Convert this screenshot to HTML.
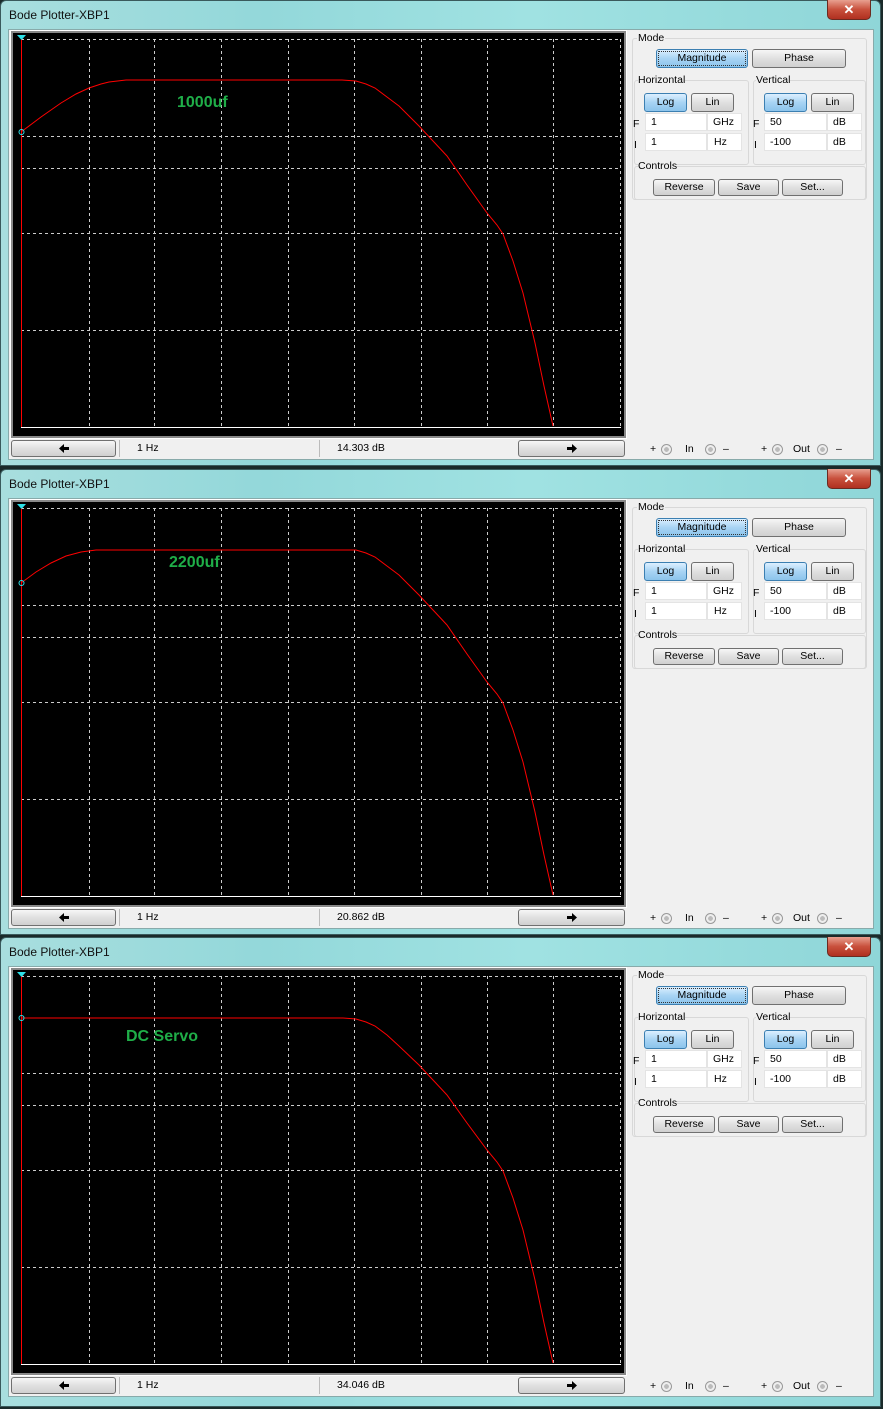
<!DOCTYPE html>
<html><head><meta charset="utf-8"><style>
*{box-sizing:border-box;margin:0;padding:0}
body{width:883px;height:1409px;background:#1a2a2a;position:relative;overflow:hidden;font-family:"Liberation Sans",sans-serif;font-size:11px;color:#000}
.win{position:absolute;left:0;width:881px;height:466px;border:1px solid #3a5a5c;border-radius:6px 6px 0 0;background:linear-gradient(90deg,#a8dede 0%,#93d8da 30%,#a0e2e2 60%,#8fd6d8 100%)}
.title{position:absolute;left:8px;top:7px;font-size:12px;color:#111}
.close{position:absolute;left:826px;top:-1px;width:44px;height:20px;border:1px solid #6a2a20;border-top:none;border-radius:0 0 5px 5px;background:linear-gradient(#e8a090,#c8503c 50%,#b03020);color:#fff;font-weight:bold;font-size:13px;text-align:center;line-height:19px}
.content{position:absolute;left:7px;top:28px;width:866px;height:431px;background:#f0f0f0;border:1px solid #8aa}
.plot{position:absolute;left:10px;top:30px;width:615px;height:407px;background:#000;border:2px solid #888;outline:1px solid #fff}
.btn{position:absolute;height:17px;border:1px solid #707070;border-radius:3px;background:linear-gradient(#f6f6f6,#e0e0e0 50%,#d0d0d0);text-align:center;line-height:15px;font-size:10.5px}
.btn.on{background:linear-gradient(#dcefff,#a8d4f4 50%,#8cc4ec);border-color:#3c7fb1}
.btn svg{margin-top:3px}
.fld{position:absolute;height:18px;background:#fff;border:1px solid #e4e4e4;padding-left:5px;line-height:17px;font-size:10.5px}
.lbl{position:absolute;font-size:10.5px}
.grp{position:absolute;border:1px solid #d8d8d8;border-radius:3px}
.st{position:absolute;top:439px;height:17px;background:#f0f0f0;border-left:1px solid #bbb;line-height:16px;padding-left:17px;font-size:10.5px}
.dot{position:absolute;width:11px;height:11px;border-radius:50%;border:1px solid #999;background:radial-gradient(#bbb 35%,#eee 40%)}
.tag{position:absolute;color:#1fae48;font-weight:bold;font-size:16px}
</style></head><body>

<!-- WINDOW 1 -->
<div class="win" style="top:0">
<div class="title">Bode Plotter-XBP1</div><div class="close">✕</div>
<div class="content"></div>
<div class="plot"></div>
<svg style="position:absolute;left:0;top:0" width="881" height="466">
<g stroke="#ccc" stroke-dasharray="3,3" stroke-width="1">
<line x1="20" y1="38.5" x2="620" y2="38.5"/><line x1="20" y1="135.5" x2="620" y2="135.5"/><line x1="20" y1="167.5" x2="620" y2="167.5"/><line x1="20" y1="232.5" x2="620" y2="232.5"/><line x1="20" y1="329.5" x2="620" y2="329.5"/>
<line x1="88.5" y1="38" x2="88.5" y2="426"/><line x1="153.5" y1="38" x2="153.5" y2="426"/><line x1="220.5" y1="38" x2="220.5" y2="426"/><line x1="287.5" y1="38" x2="287.5" y2="426"/><line x1="353.5" y1="38" x2="353.5" y2="426"/><line x1="420.5" y1="38" x2="420.5" y2="426"/><line x1="486.5" y1="38" x2="486.5" y2="426"/><line x1="552.5" y1="38" x2="552.5" y2="426"/><line x1="619.5" y1="38" x2="619.5" y2="426"/>
</g>
<line x1="20" y1="426.5" x2="620" y2="426.5" stroke="#fff"/>
<line x1="20.5" y1="36" x2="20.5" y2="426" stroke="#f00"/>
<path d="M16,34 L25,34 L20.5,39Z" fill="#2de0e8"/>
<path d="M20,131 L40,116 L60,102 L75,93 L88,87 L100,83 L108,81 L125,79 L341,79 L355,80 L365,83 L374,87 L386,96 L398,105 L418,125 L432,140 L446,155 L466,184 L486,212 L496,224 L502,233 L512,260 L522,292 L534,342 L543,385 L552,425" fill="none" stroke="#f00"/>
<circle cx="20.5" cy="131" r="2.5" fill="none" stroke="#2de0e8"/>
</svg>
<div class="tag" style="left:176px;top:93px">1000uf</div>
<div class="btn" style="left:10px;top:439px;width:105px"><svg width="10" height="9"><path d="M0,4.5 L5,0 L5,3 L10,3 L10,6 L5,6 L5,9Z"/></svg></div>
<div class="st" style="left:118px;width:200px">1 Hz</div>
<div class="st" style="left:318px;width:198px">14.303 dB</div>
<div class="btn" style="left:517px;top:439px;width:107px"><svg width="10" height="9"><path d="M10,4.5 L5,0 L5,3 L0,3 L0,6 L5,6 L5,9Z"/></svg></div>
<div class="lbl" style="left:649px;top:442px">+</div><div class="dot" style="left:660px;top:443px"></div>
<div class="lbl" style="left:684px;top:442px">In</div><div class="dot" style="left:704px;top:443px"></div><div class="lbl" style="left:722px;top:442px">–</div>
<div class="lbl" style="left:760px;top:442px">+</div><div class="dot" style="left:771px;top:443px"></div>
<div class="lbl" style="left:792px;top:442px">Out</div><div class="dot" style="left:816px;top:443px"></div><div class="lbl" style="left:835px;top:442px">–</div>
<div class="grp" style="left:631px;top:37px;width:235px;height:162px"></div>
<div class="lbl" style="left:636px;top:31px;background:#f0f0f0;padding:0 1px">Mode</div>
<div class="btn on" style="left:655px;top:48px;width:92px;height:19px;line-height:17px;outline:1px dotted #333;outline-offset:-3px">Magnitude</div>
<div class="btn" style="left:751px;top:48px;width:94px;height:19px;line-height:17px">Phase</div>
<div class="grp" style="left:633px;top:79px;width:115px;height:85px"></div>
<div class="lbl" style="left:637px;top:73px;background:#f0f0f0">Horizontal</div>
<div class="grp" style="left:752px;top:79px;width:113px;height:85px"></div>
<div class="lbl" style="left:755px;top:73px;background:#f0f0f0">Vertical</div>
<div class="btn on" style="left:643px;top:92px;width:43px;height:19px;line-height:17px">Log</div>
<div class="btn" style="left:690px;top:92px;width:43px;height:19px;line-height:17px">Lin</div>
<div class="btn on" style="left:763px;top:92px;width:43px;height:19px;line-height:17px">Log</div>
<div class="btn" style="left:810px;top:92px;width:43px;height:19px;line-height:17px">Lin</div>
<div class="lbl" style="left:632px;top:117px">F</div><div class="lbl" style="left:633px;top:138px">I</div>
<div class="fld" style="left:644px;top:112px;width:62px">1</div><div class="fld" style="left:706px;top:112px;width:35px">GHz</div>
<div class="fld" style="left:644px;top:132px;width:62px">1</div><div class="fld" style="left:706px;top:132px;width:35px;padding-left:6px">Hz</div>
<div class="lbl" style="left:752px;top:117px">F</div><div class="lbl" style="left:753px;top:138px">I</div>
<div class="fld" style="left:763px;top:112px;width:63px">50</div><div class="fld" style="left:826px;top:112px;width:35px">dB</div>
<div class="fld" style="left:763px;top:132px;width:63px">-100</div><div class="fld" style="left:826px;top:132px;width:35px">dB</div>
<div class="grp" style="left:633px;top:165px;width:232px;height:34px"></div>
<div class="lbl" style="left:637px;top:159px;background:#f0f0f0">Controls</div>
<div class="btn" style="left:652px;top:178px;width:62px">Reverse</div>
<div class="btn" style="left:717px;top:178px;width:61px">Save</div>
<div class="btn" style="left:781px;top:178px;width:61px">Set...</div>
</div>

<!-- WINDOW 2 -->
<div class="win" style="top:469px">
<div class="title">Bode Plotter-XBP1</div><div class="close">✕</div>
<div class="content"></div>
<div class="plot"></div>
<svg style="position:absolute;left:0;top:0" width="881" height="466">
<g stroke="#ccc" stroke-dasharray="3,3" stroke-width="1">
<line x1="20" y1="38.5" x2="620" y2="38.5"/><line x1="20" y1="135.5" x2="620" y2="135.5"/><line x1="20" y1="167.5" x2="620" y2="167.5"/><line x1="20" y1="232.5" x2="620" y2="232.5"/><line x1="20" y1="329.5" x2="620" y2="329.5"/>
<line x1="88.5" y1="38" x2="88.5" y2="426"/><line x1="153.5" y1="38" x2="153.5" y2="426"/><line x1="220.5" y1="38" x2="220.5" y2="426"/><line x1="287.5" y1="38" x2="287.5" y2="426"/><line x1="353.5" y1="38" x2="353.5" y2="426"/><line x1="420.5" y1="38" x2="420.5" y2="426"/><line x1="486.5" y1="38" x2="486.5" y2="426"/><line x1="552.5" y1="38" x2="552.5" y2="426"/><line x1="619.5" y1="38" x2="619.5" y2="426"/>
</g>
<line x1="20" y1="426.5" x2="620" y2="426.5" stroke="#fff"/>
<line x1="20.5" y1="36" x2="20.5" y2="426" stroke="#f00"/>
<path d="M16,34 L25,34 L20.5,39Z" fill="#2de0e8"/>
<path d="M20,113 L35,102 L50,93 L65,86 L80,82 L95,80 L355,80 L365,83 L374,87 L386,96 L398,105 L418,125 L432,140 L446,155 L466,184 L486,212 L496,224 L502,233 L512,260 L522,292 L534,342 L543,385 L552,425" fill="none" stroke="#f00"/>
<circle cx="20.5" cy="113" r="2.5" fill="none" stroke="#2de0e8"/>
</svg>
<div class="tag" style="left:168px;top:84px">2200uf</div>
<div class="btn" style="left:10px;top:439px;width:105px"><svg width="10" height="9"><path d="M0,4.5 L5,0 L5,3 L10,3 L10,6 L5,6 L5,9Z"/></svg></div>
<div class="st" style="left:118px;width:200px">1 Hz</div>
<div class="st" style="left:318px;width:198px">20.862 dB</div>
<div class="btn" style="left:517px;top:439px;width:107px"><svg width="10" height="9"><path d="M10,4.5 L5,0 L5,3 L0,3 L0,6 L5,6 L5,9Z"/></svg></div>
<div class="lbl" style="left:649px;top:442px">+</div><div class="dot" style="left:660px;top:443px"></div>
<div class="lbl" style="left:684px;top:442px">In</div><div class="dot" style="left:704px;top:443px"></div><div class="lbl" style="left:722px;top:442px">–</div>
<div class="lbl" style="left:760px;top:442px">+</div><div class="dot" style="left:771px;top:443px"></div>
<div class="lbl" style="left:792px;top:442px">Out</div><div class="dot" style="left:816px;top:443px"></div><div class="lbl" style="left:835px;top:442px">–</div>
<div class="grp" style="left:631px;top:37px;width:235px;height:162px"></div>
<div class="lbl" style="left:636px;top:31px;background:#f0f0f0;padding:0 1px">Mode</div>
<div class="btn on" style="left:655px;top:48px;width:92px;height:19px;line-height:17px;outline:1px dotted #333;outline-offset:-3px">Magnitude</div>
<div class="btn" style="left:751px;top:48px;width:94px;height:19px;line-height:17px">Phase</div>
<div class="grp" style="left:633px;top:79px;width:115px;height:85px"></div>
<div class="lbl" style="left:637px;top:73px;background:#f0f0f0">Horizontal</div>
<div class="grp" style="left:752px;top:79px;width:113px;height:85px"></div>
<div class="lbl" style="left:755px;top:73px;background:#f0f0f0">Vertical</div>
<div class="btn on" style="left:643px;top:92px;width:43px;height:19px;line-height:17px">Log</div>
<div class="btn" style="left:690px;top:92px;width:43px;height:19px;line-height:17px">Lin</div>
<div class="btn on" style="left:763px;top:92px;width:43px;height:19px;line-height:17px">Log</div>
<div class="btn" style="left:810px;top:92px;width:43px;height:19px;line-height:17px">Lin</div>
<div class="lbl" style="left:632px;top:117px">F</div><div class="lbl" style="left:633px;top:138px">I</div>
<div class="fld" style="left:644px;top:112px;width:62px">1</div><div class="fld" style="left:706px;top:112px;width:35px">GHz</div>
<div class="fld" style="left:644px;top:132px;width:62px">1</div><div class="fld" style="left:706px;top:132px;width:35px;padding-left:6px">Hz</div>
<div class="lbl" style="left:752px;top:117px">F</div><div class="lbl" style="left:753px;top:138px">I</div>
<div class="fld" style="left:763px;top:112px;width:63px">50</div><div class="fld" style="left:826px;top:112px;width:35px">dB</div>
<div class="fld" style="left:763px;top:132px;width:63px">-100</div><div class="fld" style="left:826px;top:132px;width:35px">dB</div>
<div class="grp" style="left:633px;top:165px;width:232px;height:34px"></div>
<div class="lbl" style="left:637px;top:159px;background:#f0f0f0">Controls</div>
<div class="btn" style="left:652px;top:178px;width:62px">Reverse</div>
<div class="btn" style="left:717px;top:178px;width:61px">Save</div>
<div class="btn" style="left:781px;top:178px;width:61px">Set...</div>
</div>

<!-- WINDOW 3 -->
<div class="win" style="top:937px;height:470px">
<div class="title">Bode Plotter-XBP1</div><div class="close">✕</div>
<div class="content"></div>
<div class="plot"></div>
<svg style="position:absolute;left:0;top:0" width="881" height="466">
<g stroke="#ccc" stroke-dasharray="3,3" stroke-width="1">
<line x1="20" y1="38.5" x2="620" y2="38.5"/><line x1="20" y1="135.5" x2="620" y2="135.5"/><line x1="20" y1="167.5" x2="620" y2="167.5"/><line x1="20" y1="232.5" x2="620" y2="232.5"/><line x1="20" y1="329.5" x2="620" y2="329.5"/>
<line x1="88.5" y1="38" x2="88.5" y2="426"/><line x1="153.5" y1="38" x2="153.5" y2="426"/><line x1="220.5" y1="38" x2="220.5" y2="426"/><line x1="287.5" y1="38" x2="287.5" y2="426"/><line x1="353.5" y1="38" x2="353.5" y2="426"/><line x1="420.5" y1="38" x2="420.5" y2="426"/><line x1="486.5" y1="38" x2="486.5" y2="426"/><line x1="552.5" y1="38" x2="552.5" y2="426"/><line x1="619.5" y1="38" x2="619.5" y2="426"/>
</g>
<line x1="20" y1="426.5" x2="620" y2="426.5" stroke="#fff"/>
<line x1="20.5" y1="36" x2="20.5" y2="426" stroke="#f00"/>
<path d="M16,34 L25,34 L20.5,39Z" fill="#2de0e8"/>
<path d="M20,80 L342,80 L355,81 L365,84 L374,88 L386,97 L398,108 L418,127 L432,142 L446,157 L466,185 L486,212 L496,224 L502,233 L512,260 L522,292 L534,342 L543,385 L552,425" fill="none" stroke="#f00"/>
<circle cx="20.5" cy="80" r="2.5" fill="none" stroke="#2de0e8"/>
</svg>
<div class="tag" style="left:125px;top:90px">DC Servo</div>
<div class="btn" style="left:10px;top:439px;width:105px"><svg width="10" height="9"><path d="M0,4.5 L5,0 L5,3 L10,3 L10,6 L5,6 L5,9Z"/></svg></div>
<div class="st" style="left:118px;width:200px">1 Hz</div>
<div class="st" style="left:318px;width:198px">34.046 dB</div>
<div class="btn" style="left:517px;top:439px;width:107px"><svg width="10" height="9"><path d="M10,4.5 L5,0 L5,3 L0,3 L0,6 L5,6 L5,9Z"/></svg></div>
<div class="lbl" style="left:649px;top:442px">+</div><div class="dot" style="left:660px;top:443px"></div>
<div class="lbl" style="left:684px;top:442px">In</div><div class="dot" style="left:704px;top:443px"></div><div class="lbl" style="left:722px;top:442px">–</div>
<div class="lbl" style="left:760px;top:442px">+</div><div class="dot" style="left:771px;top:443px"></div>
<div class="lbl" style="left:792px;top:442px">Out</div><div class="dot" style="left:816px;top:443px"></div><div class="lbl" style="left:835px;top:442px">–</div>
<div class="grp" style="left:631px;top:37px;width:235px;height:162px"></div>
<div class="lbl" style="left:636px;top:31px;background:#f0f0f0;padding:0 1px">Mode</div>
<div class="btn on" style="left:655px;top:48px;width:92px;height:19px;line-height:17px;outline:1px dotted #333;outline-offset:-3px">Magnitude</div>
<div class="btn" style="left:751px;top:48px;width:94px;height:19px;line-height:17px">Phase</div>
<div class="grp" style="left:633px;top:79px;width:115px;height:85px"></div>
<div class="lbl" style="left:637px;top:73px;background:#f0f0f0">Horizontal</div>
<div class="grp" style="left:752px;top:79px;width:113px;height:85px"></div>
<div class="lbl" style="left:755px;top:73px;background:#f0f0f0">Vertical</div>
<div class="btn on" style="left:643px;top:92px;width:43px;height:19px;line-height:17px">Log</div>
<div class="btn" style="left:690px;top:92px;width:43px;height:19px;line-height:17px">Lin</div>
<div class="btn on" style="left:763px;top:92px;width:43px;height:19px;line-height:17px">Log</div>
<div class="btn" style="left:810px;top:92px;width:43px;height:19px;line-height:17px">Lin</div>
<div class="lbl" style="left:632px;top:117px">F</div><div class="lbl" style="left:633px;top:138px">I</div>
<div class="fld" style="left:644px;top:112px;width:62px">1</div><div class="fld" style="left:706px;top:112px;width:35px">GHz</div>
<div class="fld" style="left:644px;top:132px;width:62px">1</div><div class="fld" style="left:706px;top:132px;width:35px;padding-left:6px">Hz</div>
<div class="lbl" style="left:752px;top:117px">F</div><div class="lbl" style="left:753px;top:138px">I</div>
<div class="fld" style="left:763px;top:112px;width:63px">50</div><div class="fld" style="left:826px;top:112px;width:35px">dB</div>
<div class="fld" style="left:763px;top:132px;width:63px">-100</div><div class="fld" style="left:826px;top:132px;width:35px">dB</div>
<div class="grp" style="left:633px;top:165px;width:232px;height:34px"></div>
<div class="lbl" style="left:637px;top:159px;background:#f0f0f0">Controls</div>
<div class="btn" style="left:652px;top:178px;width:62px">Reverse</div>
<div class="btn" style="left:717px;top:178px;width:61px">Save</div>
<div class="btn" style="left:781px;top:178px;width:61px">Set...</div>
</div>
</body></html>
